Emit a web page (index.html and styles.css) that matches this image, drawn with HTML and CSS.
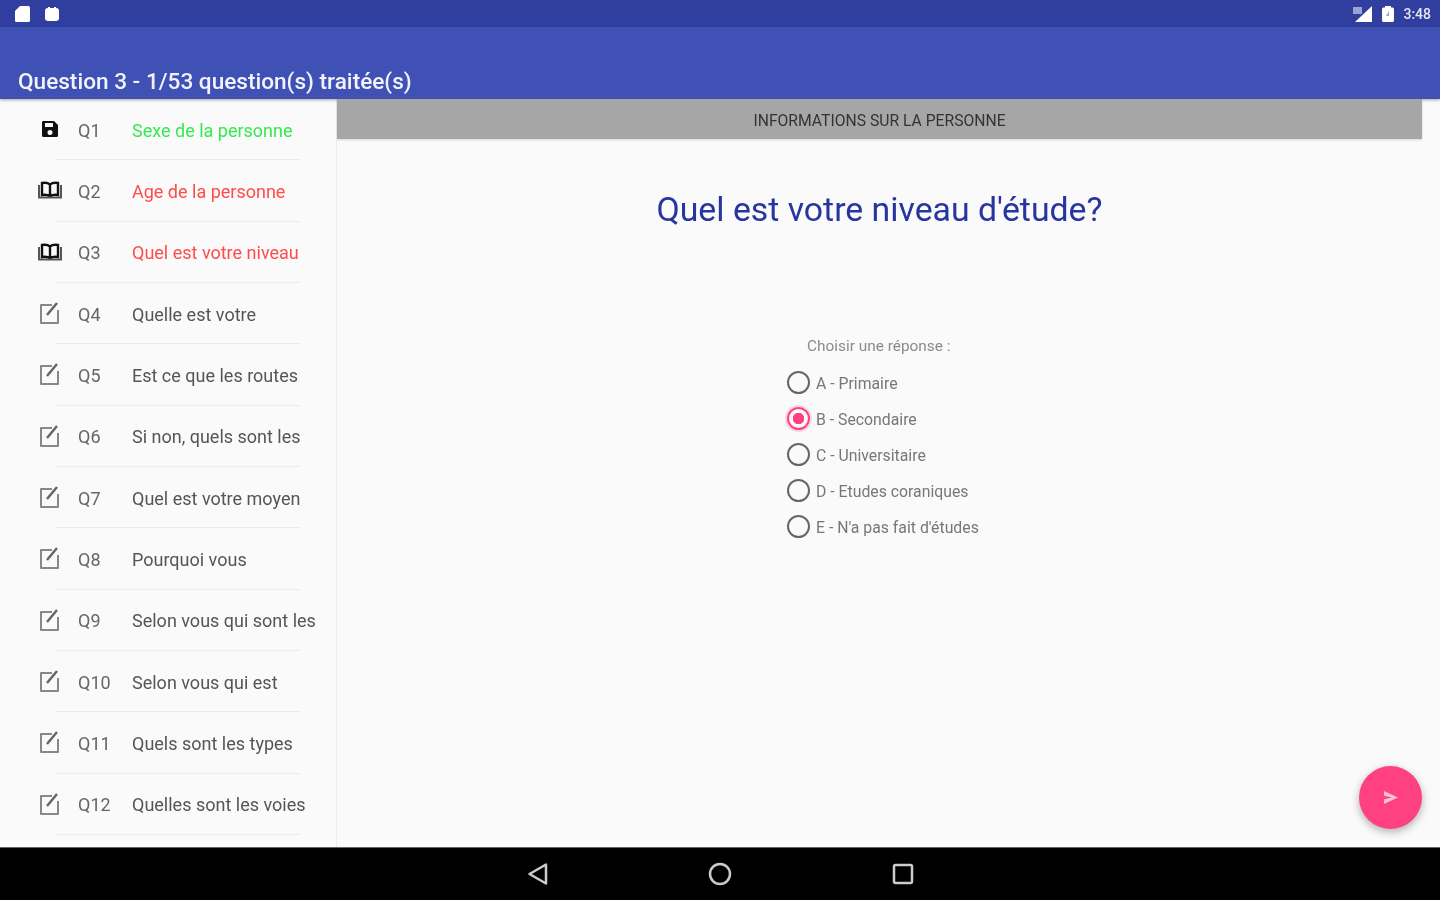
FILE: index.html
```html
<!DOCTYPE html>
<html lang="fr">
<head>
  <meta charset="UTF-8">
  <meta name="viewport" content="width=device-width, initial-scale=1.0">
  <title>Question 3</title>
  <link rel="stylesheet" href="styles.css">
</head>
<body>

  <!-- Shared icons -->
  <svg class="icon-defs" aria-hidden="true">
    <symbol id="icon-save" viewBox="0 0 18 18">
      <path fill="#111" fill-rule="evenodd" d="M2 1h11l4 4v10.500a1.500 1.500 0 0 1-1.500 1.500h-13A1.500 1.500 0 0 1 1 15.500v-13A1.500 1.500 0 0 1 2 1zm2 2v4h8V3zm5 7a2.500 2.500 0 1 0 0 5 2.500 2.500 0 0 0 0-5z"/>
    </symbol>
    <symbol id="icon-book" viewBox="0 0 24 18">
      <path fill="none" stroke="#111" stroke-width="2.400" d="M12 3.500C10 1.800 7 1.500 4 2v12c3-.5 6-.2 8 1.500 2-1.700 5-2 8-1.500V2c-3-.5-6-.2-8 1.500zm0 0v12"/>
      <path fill="none" stroke="#555" stroke-width="2" d="M1 4v12.500h22V4"/>
    </symbol>
    <symbol id="icon-edit" viewBox="0 0 22 24">
      <path fill="none" stroke="#888" stroke-width="2" stroke-linejoin="round" d="M13 4H2v18h17V9"/>
      <path fill="none" stroke="#666" stroke-width="2.500" d="M8 14 18 2"/>
    </symbol>
  </svg>

  <div class="screen">
    <!-- Status bar -->
    <div class="status-bar">
      <div class="status-left">
        <svg class="status-icon" width="15" height="16" viewBox="0 0 15 16"><path fill="#fff" d="M5 0h8.500a1.500 1.500 0 0 1 1.500 1.500v13a1.500 1.500 0 0 1-1.500 1.500h-12A1.500 1.500 0 0 1 0 14.500V5z"/></svg>
        <svg class="status-icon" width="14" height="14" viewBox="0 0 14 14"><rect x="0" y="1" width="14" height="13" rx="3" fill="#fff"/><path stroke="#fff" stroke-width="2" d="M4 0v3M10 0v3"/></svg>
      </div>
      <div class="status-right">
        <svg class="status-icon" width="20" height="16" viewBox="0 0 20 16"><path fill="#fff" d="M19 0v16H2z"/><path fill="#9aa3d4" d="M0 1h9v7H0z"/></svg>
        <svg class="status-icon" width="12" height="16" viewBox="0 0 12 16"><path fill="#fff" d="M3 0h6v1.500h1.500A1.500 1.500 0 0 1 12 3v11.500a1.500 1.500 0 0 1-1.500 1.500h-9A1.500 1.500 0 0 1 0 14.500V3a1.500 1.500 0 0 1 1.500-1.500H3z"/><path fill="#9aa3d4" d="M7 5v5H4z"/></svg>
        <span class="status-time">3:48</span>
      </div>
    </div>

    <!-- App bar -->
    <header class="app-bar">Question 3 - 1/53 question(s) traitée(s)</header>

    <div class="content">
      <!-- Question list -->
      <nav class="question-list">
        <div class="question-row">
          <svg class="row-icon" width="18" height="18"><use href="#icon-save"/></svg>
          <span class="row-num">Q1</span>
          <span class="row-text answered">Sexe de la personne</span>
        </div>
        <hr class="divider">
        <div class="question-row">
          <svg class="row-icon" width="24" height="18"><use href="#icon-book"/></svg>
          <span class="row-num">Q2</span>
          <span class="row-text current">Age de la personne</span>
        </div>
        <hr class="divider">
        <div class="question-row">
          <svg class="row-icon" width="24" height="18"><use href="#icon-book"/></svg>
          <span class="row-num">Q3</span>
          <span class="row-text current">Quel est votre niveau</span>
        </div>
        <hr class="divider">
        <div class="question-row">
          <svg class="row-icon" width="22" height="24"><use href="#icon-edit"/></svg>
          <span class="row-num">Q4</span>
          <span class="row-text">Quelle est votre</span>
        </div>
        <hr class="divider">
        <div class="question-row">
          <svg class="row-icon" width="22" height="24"><use href="#icon-edit"/></svg>
          <span class="row-num">Q5</span>
          <span class="row-text">Est ce que les routes</span>
        </div>
        <hr class="divider">
        <div class="question-row">
          <svg class="row-icon" width="22" height="24"><use href="#icon-edit"/></svg>
          <span class="row-num">Q6</span>
          <span class="row-text">Si non, quels sont les</span>
        </div>
        <hr class="divider">
        <div class="question-row">
          <svg class="row-icon" width="22" height="24"><use href="#icon-edit"/></svg>
          <span class="row-num">Q7</span>
          <span class="row-text">Quel est votre moyen</span>
        </div>
        <hr class="divider">
        <div class="question-row">
          <svg class="row-icon" width="22" height="24"><use href="#icon-edit"/></svg>
          <span class="row-num">Q8</span>
          <span class="row-text">Pourquoi vous</span>
        </div>
        <hr class="divider">
        <div class="question-row">
          <svg class="row-icon" width="22" height="24"><use href="#icon-edit"/></svg>
          <span class="row-num">Q9</span>
          <span class="row-text">Selon vous qui sont les</span>
        </div>
        <hr class="divider">
        <div class="question-row">
          <svg class="row-icon" width="22" height="24"><use href="#icon-edit"/></svg>
          <span class="row-num">Q10</span>
          <span class="row-text">Selon vous qui est</span>
        </div>
        <hr class="divider">
        <div class="question-row">
          <svg class="row-icon" width="22" height="24"><use href="#icon-edit"/></svg>
          <span class="row-num">Q11</span>
          <span class="row-text">Quels sont les types</span>
        </div>
        <hr class="divider">
        <div class="question-row">
          <svg class="row-icon" width="22" height="24"><use href="#icon-edit"/></svg>
          <span class="row-num">Q12</span>
          <span class="row-text">Quelles sont les voies</span>
        </div>
        <hr class="divider">
      </nav>

      <!-- Question panel -->
      <main class="question-panel">
        <div class="section-bar">INFORMATIONS SUR LA PERSONNE</div>
        <h1 class="question-title">Quel est votre niveau d'étude?</h1>
        <div class="answers">
          <p class="answers-label">Choisir une réponse :</p>
          <div class="answer"><span class="radio"></span><span class="answer-text">A - Primaire</span></div>
          <div class="answer"><span class="radio checked"></span><span class="answer-text">B - Secondaire</span></div>
          <div class="answer"><span class="radio"></span><span class="answer-text">C - Universitaire</span></div>
          <div class="answer"><span class="radio"></span><span class="answer-text">D - Etudes coraniques</span></div>
          <div class="answer"><span class="radio"></span><span class="answer-text">E - N'a pas fait d'études</span></div>
        </div>
        <button class="fab" aria-label="Suivant">
          <svg width="14" height="13" viewBox="0 0 16 15"><path fill="#f7c4d7" d="M0 0l16 7.500L0 15l0-5.500 9-2-9-2z"/></svg>
        </button>
      </main>
    </div>

    <!-- Navigation bar -->
    <footer class="nav-bar">
      <svg width="22" height="24" viewBox="0 0 22 24"><path fill="none" stroke="#ccc" stroke-width="2.500" stroke-linejoin="round" d="M20 2.500v19L3.500 12z"/></svg>
      <svg width="24" height="24" viewBox="0 0 24 24"><circle cx="12" cy="12" r="10" fill="none" stroke="#ccc" stroke-width="2.500"/></svg>
      <svg width="22" height="22" viewBox="0 0 22 22"><rect x="2" y="2" width="18" height="18" rx="1.500" fill="none" stroke="#ccc" stroke-width="2.500"/></svg>
    </footer>
  </div>

</body>
</html>
```

FILE: styles.css
```css
/* Page frame */
* {
  box-sizing: border-box;
}

body {
  margin: 0;
  font-family: Roboto, sans-serif;
  background-color: #fafafa;
}

.icon-defs {
  display: none;
}

.screen {
  display: flex;
  flex-direction: column;
  height: 900px;
  overflow: hidden;
  filter: blur(0.7px);
}

/* Status bar */
.status-bar {
  display: flex;
  justify-content: space-between;
  align-items: center;
  height: 27px;
  padding: 1px 9px 0 15px;
  background-color: #303f9f;
}

.status-left,
.status-right {
  display: flex;
  align-items: center;
}

.status-left {
  gap: 15px;
}

.status-right {
  gap: 9px;
}

.status-time {
  color: #e4e6f4;
  font-size: 14px;
  font-weight: 500;
}

/* App bar */
.app-bar {
  display: flex;
  align-items: flex-end;
  height: 72px;
  padding: 0 18px 2px;
  background-color: #3f51b5;
  color: #f2f3fa;
  font-size: 22.600px;
  font-weight: 500;
  line-height: 30px;
  box-shadow: 0 1px 3px rgba(0, 0, 0, 0.35);
  position: relative;
}

.content {
  display: flex;
  flex: 1;
  min-height: 0;
}

/* Question list */
.question-list {
  width: 337px;
  flex-shrink: 0;
  border-right: 1px solid #eeeeee;
  overflow: hidden;
}

.question-row {
  display: flex;
  align-items: center;
  height: 60.33px;
  padding-left: 50px;
  font-size: 18px;
  color: #555;
  white-space: nowrap;
}

.row-icon {
  flex-shrink: 0;
  margin-left: -12px;
  margin-right: -12px;
  width: 24px;
}

.row-num {
  width: 54px;
  margin-left: 28px;
  padding-top: 2px;
  color: #666;
}

.row-text {
  padding-top: 2px;
}

.row-text.answered {
  color: #35ea4e;
}

.row-text.current {
  color: #ff4b4b;
}

.divider {
  height: 1px;
  margin: 0 36px 0 55px;
  border: none;
  background-color: #ececec;
}

/* Question panel */
.question-panel {
  flex: 1;
  display: flex;
  flex-direction: column;
  align-items: center;
  padding-right: 18px;
  position: relative;
}

.section-bar {
  width: 100%;
  height: 40px;
  line-height: 44px;
  background-color: #a6a6a6;
  color: #333;
  font-size: 15.700px;
  text-align: center;
  box-shadow: 0 1px 2px rgba(0, 0, 0, 0.15);
}

.question-title {
  margin: 50px 0 0;
  color: #27359f;
  font-size: 33.800px;
  font-weight: 400;
  line-height: 42px;
}

.answers {
  align-self: flex-start;
  margin: 105px 0 0 450px;
  color: #777;
  font-size: 15.800px;
}

.answers-label {
  margin: 0 0 8px 20px;
  font-size: 15.400px;
  line-height: 20px;
  color: #8a8a8a;
}

.answer {
  display: flex;
  align-items: center;
  gap: 6px;
  height: 36px;
  color: #777;
}

.answer-text {
  padding-top: 2px;
}

.radio {
  width: 23px;
  height: 23px;
  border: 2px solid #666;
  border-radius: 50%;
}

.radio.checked {
  border-color: #ff4081;
  background: radial-gradient(circle, #ff4081 0 5.500px, transparent 6px);
  box-shadow: 0 0 0 2px rgba(255, 64, 129, 0.2);
}

.fab {
  position: absolute;
  right: 18px;
  bottom: 18px;
  display: flex;
  align-items: center;
  justify-content: center;
  width: 63px;
  height: 63px;
  padding: 0;
  border: none;
  border-radius: 50%;
  background-color: #ff4081;
  box-shadow: 0 3px 8px rgba(0, 0, 0, 0.3);
}

/* Navigation bar */
.nav-bar {
  display: flex;
  justify-content: center;
  align-items: center;
  gap: 160px;
  height: 53px;
  background-color: #000;
  border-top: 1px solid #666;
}
```
